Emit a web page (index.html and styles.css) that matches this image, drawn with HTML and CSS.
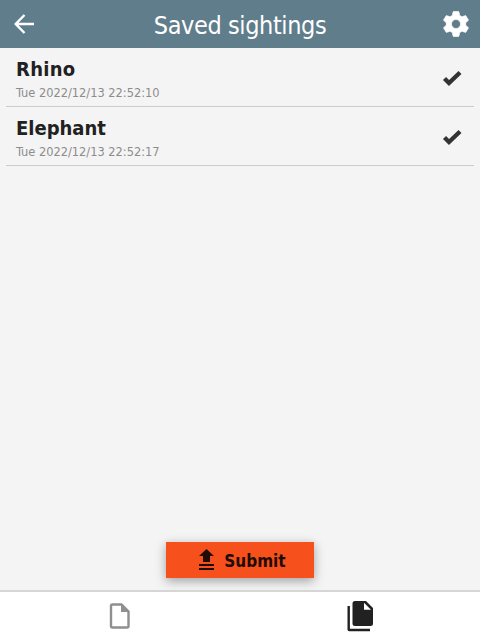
FILE: index.html
```
<!DOCTYPE html>
<html lang="en">
<head>
<meta charset="utf-8">
<title>Saved sightings</title>
<link rel="stylesheet" href="styles.css">
</head>
<body>
<header class="titlebar">
  <button class="bar-button"><svg width="24" height="24" viewBox="0 0 24 24"><path d="M22 12H4M12.500 3L3.700 12l8.800 9" fill="none" stroke="#fff" stroke-width="2.400"/></svg></button>
  <h1>Saved sightings</h1>
  <button class="bar-button"><svg width="32" height="32" viewBox="0 0 24 24" fill="#fff" stroke="#fff" stroke-width=".5" stroke-linejoin="round"><path fill-rule="evenodd" d="M9.900 2.700h4.200l.7 2.900 1.600.9 2.900-.8 2.100 3.400-2.100 2v1.800l2.100 2-2.100 3.400-2.900-.8-1.600.9-.7 2.900H9.900l-.7-2.900-1.600-.9-2.900.8-2.100-3.400 2.100-2v-1.800l-2.100-2 2.100-3.400 2.900.8 1.600-.9zM12 8.600a3.400 3.400 0 1 0 0 6.800 3.400 3.400 0 0 0 0-6.800z"/></svg></button>
</header>
<main class="content">
  <ul class="list">
    <li class="row">
      <div><h2 class="short">Rhino</h2><p>Tue 2022/12/13 22:52:10</p></div>
      <svg class="check" width="20" height="18" viewBox="0 0 20 18"><path d="M2.500 9.500l4.500 4.500L18 3.500" fill="none" stroke="#333" stroke-width="4.300"/></svg>
    </li>
    <li class="row">
      <div><h2>Elephant</h2><p>Tue 2022/12/13 22:52:17</p></div>
      <svg class="check" width="20" height="18" viewBox="0 0 20 18"><path d="M2.500 9.500l4.500 4.500L18 3.500" fill="none" stroke="#333" stroke-width="4.300"/></svg>
    </li>
  </ul>
  <button class="submit"><svg width="16" height="22" viewBox="0 0 16 22"><path d="M7.500 0L15 7h-4v6H4V7H0zM0 15h15v2H0zM0 19h15v2H0z" fill="#210b04"/></svg><span>Submit</span></button>
</main>
<nav class="tabs">
  <button class="tab"><svg width="22" height="28" viewBox="0 0 22 28"><path d="M3.500 2.500h9L19.500 9.500V24a1.500 1.500 0 0 1-1.500 1.500H3.500A1.500 1.500 0 0 1 2 24V4a1.500 1.500 0 0 1 1.500-1.500z" fill="none" stroke="#8f8f8f" stroke-width="2.400"/><path d="M12 2.500V10h7.500z" fill="#8f8f8f"/></svg></button>
  <button class="tab"><svg width="27" height="32" viewBox="0 0 27 32"><path d="M8 1h11l7 7v15.500a2.500 2.500 0 0 1-2.500 2.500H8a2.500 2.500 0 0 1-2.500-2.500v-20A2.500 2.500 0 0 1 8 1z" fill="#212121"/><path d="M17 2.800v7h7z" fill="#fff"/><path d="M1.700 6v23.500a.5.5 0 0 0 .5.500H23" fill="none" stroke="#212121" stroke-width="2.400"/></svg></button>
</nav>
</body>
</html>
```
FILE: styles.css
```
* { box-sizing: border-box; }
body {
  margin: 0;
  height: 100vh;
  display: flex;
  flex-direction: column;
  background: #f4f4f4;
  color: #212121;
  font-family: "DejaVu Sans Condensed", "DejaVu Sans", sans-serif;
}
button { border: 0; padding: 0; background: none; font: inherit; color: inherit; }
svg { display: block; }
h1, h2, p, ul { margin: 0; padding: 0; }
.titlebar { height: 48px; flex: none; display: flex; align-items: center; background: #607d8b; color: #fff; }
.bar-button { width: 48px; height: 48px; display: grid; place-items: center; }
h1 { flex: 1; padding-top: 4px; text-align: center; font-size: 25px; line-height: 44px; font-weight: 400; letter-spacing: -0.4px; }
.content { flex: 1; display: flex; flex-direction: column; align-items: center; justify-content: space-between; padding-bottom: 12px; }
.list { list-style: none; width: 468px; }
.row { height: 59px; display: flex; align-items: center; justify-content: space-between; padding: 7px 12px 0 10px; border-bottom: 1px solid #ccc; }
.check { margin-top: -5px; }
h2 { font-size: 20px; line-height: 24px; font-weight: 700; }
.short { letter-spacing: 0.3px; }
.row p { font-size: 12.7px; line-height: 24px; color: #8c8c8c; }
.submit { width: 148px; height: 36px; display: flex; align-items: center; justify-content: center; gap: 9px; padding-left: 5px; background: #f6511d; color: #210b04; font-size: 17px; font-weight: 700; box-shadow: 0 3px 10px rgba(0,0,0,.35); }
.submit span { padding-top: 1px; }
.tabs { height: 50px; flex: none; display: flex; background: #fff; border-top: 2px solid #d6d6d6; }
.tab { flex: 1; display: grid; place-items: center; }
```
